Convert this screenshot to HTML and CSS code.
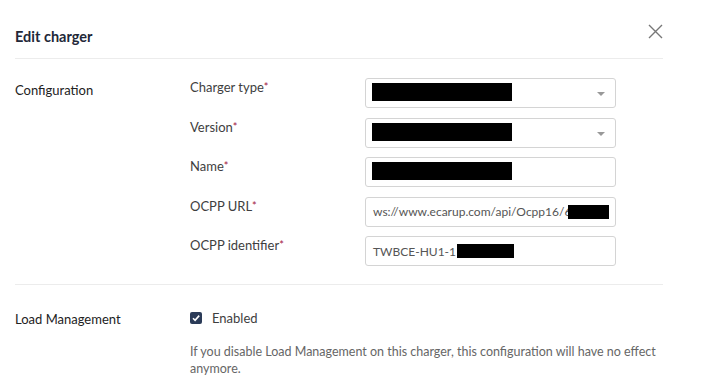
FILE: index.html
```html
<!DOCTYPE html>
<html lang="en">
<head>
    <meta charset="UTF-8">
    <meta name="viewport" content="width=device-width, initial-scale=1.0">
    <title>Edit charger</title>
    <link rel="stylesheet" href="styles.css">
</head>
<body>
    <div class="modal">
        <div class="modal-header">
            <h2 class="modal-title">Edit charger</h2>
            <button class="close-btn" aria-label="Close">
                <svg width="15" height="15" viewBox="0 0 15 15">
                    <path d="M1 1 L14 14 M14 1 L1 14" stroke="#777" stroke-width="1.4" fill="none"/>
                </svg>
            </button>
        </div>

        <div class="section">
            <div class="section-title">Configuration</div>
            <div class="fields">
                <div class="field">
                    <label class="field-label">Charger type<span class="req">*</span></label>
                    <div class="input select">
                        <span class="redacted"></span>
                        <span class="caret"></span>
                    </div>
                </div>
                <div class="field">
                    <label class="field-label">Version<span class="req">*</span></label>
                    <div class="input select">
                        <span class="redacted"></span>
                        <span class="caret"></span>
                    </div>
                </div>
                <div class="field">
                    <label class="field-label">Name<span class="req">*</span></label>
                    <div class="input">
                        <span class="redacted"></span>
                    </div>
                </div>
                <div class="field">
                    <label class="field-label">OCPP URL<span class="req">*</span></label>
                    <div class="input">
                        <span class="value">ws://www.ecarup.com/api/Ocpp16/6</span><span class="redacted small url-end"></span>
                    </div>
                </div>
                <div class="field">
                    <label class="field-label">OCPP identifier<span class="req">*</span></label>
                    <div class="input">
                        <span class="value">TWBCE-HU1-1</span><span class="redacted small id-end"></span>
                    </div>
                </div>
            </div>
        </div>

        <div class="section last">
            <div class="section-title lm">Load Management</div>
            <div class="fields">
                <label class="check">
                    <span class="checkbox">
                        <svg width="12" height="12" viewBox="0 0 12 12">
                            <path d="M3 6.2 L5.1 8.3 L9.2 3.6" stroke="#fff" stroke-width="1.6" fill="none"/>
                        </svg>
                    </span>
                    Enabled
                </label>
                <p class="help">If you disable Load Management on this charger, this configuration will have no effect anymore.</p>
            </div>
        </div>
    </div>
</body>
</html>
```

FILE: styles.css
```css
* {
    box-sizing: border-box;
    margin: 0;
    padding: 0;
}

body {
    font-family: 'Lato', 'Liberation Sans', sans-serif;
    background: #fff;
    color: #3b3b3b;
}

.modal {
    width: 663px;
    padding-left: 15px;
}

.modal-header {
    display: flex;
    justify-content: space-between;
    align-items: flex-start;
    height: 59px;
    border-bottom: 1px solid #ececec;
}

.modal-title {
    margin-top: 28px;
    font-size: 14.5px;
    line-height: 18px;
    font-weight: 700;
    color: #222838;
}

.close-btn {
    margin-top: 24px;
    background: none;
    border: none;
    width: 15px;
    height: 15px;
    cursor: pointer;
}

.section {
    display: flex;
    padding: 19px 0 18px;
    border-bottom: 1px solid #ececec;
}

.section.last {
    border-bottom: none;
    padding-top: 25px;
}

.section-title {
    width: 175px;
    flex-shrink: 0;
    padding-top: 3px;
    font-size: 13px;
    line-height: 18px;
    color: #222;
}

.section-title.lm {
    padding-top: 0;
}

.fields {
    display: flex;
    flex-direction: column;
    gap: 9.5px;
}

.field {
    display: flex;
    align-items: flex-start;
}

.field-label {
    width: 175px;
    font-size: 13px;
    line-height: 18px;
    color: #3e3e3e;
}

.req {
    color: #a3173f;
    font-size: 11px;
    vertical-align: 1px;
}

.input {
    position: relative;
    display: flex;
    align-items: center;
    width: 251px;
    height: 30px;
    padding: 0 6px;
    border: 1px solid #d4d4d4;
    border-radius: 3px;
    background: #fff;
    overflow: hidden;
    white-space: nowrap;
}

.value {
    font-size: 12px;
    color: #555;
    padding-left: 1px;
}

.redacted {
    display: inline-block;
    width: 140px;
    height: 18px;
    margin-top: -2px;
    background: #000;
}

.redacted.small {
    height: 14px;
    margin-top: 0;
}

.url-end {
    width: 42px;
    margin-left: -3px;
}

.id-end {
    width: 57px;
    margin-left: 1px;
}

.caret {
    position: absolute;
    right: 10px;
    top: 13px;
    width: 0;
    height: 0;
    border-left: 4px solid transparent;
    border-right: 4px solid transparent;
    border-top: 4px solid #999;
}

.check {
    display: flex;
    align-items: center;
    gap: 10px;
    margin-top: -1px;
    font-size: 13px;
    line-height: 18px;
    color: #3e3e3e;
}

.checkbox {
    display: flex;
    width: 12px;
    height: 12px;
    border-radius: 2px;
    background: #2b3b58;
}

.help {
    margin-top: 6px;
    width: 475px;
    font-size: 12.5px;
    line-height: 17px;
    color: #666;
}
```
